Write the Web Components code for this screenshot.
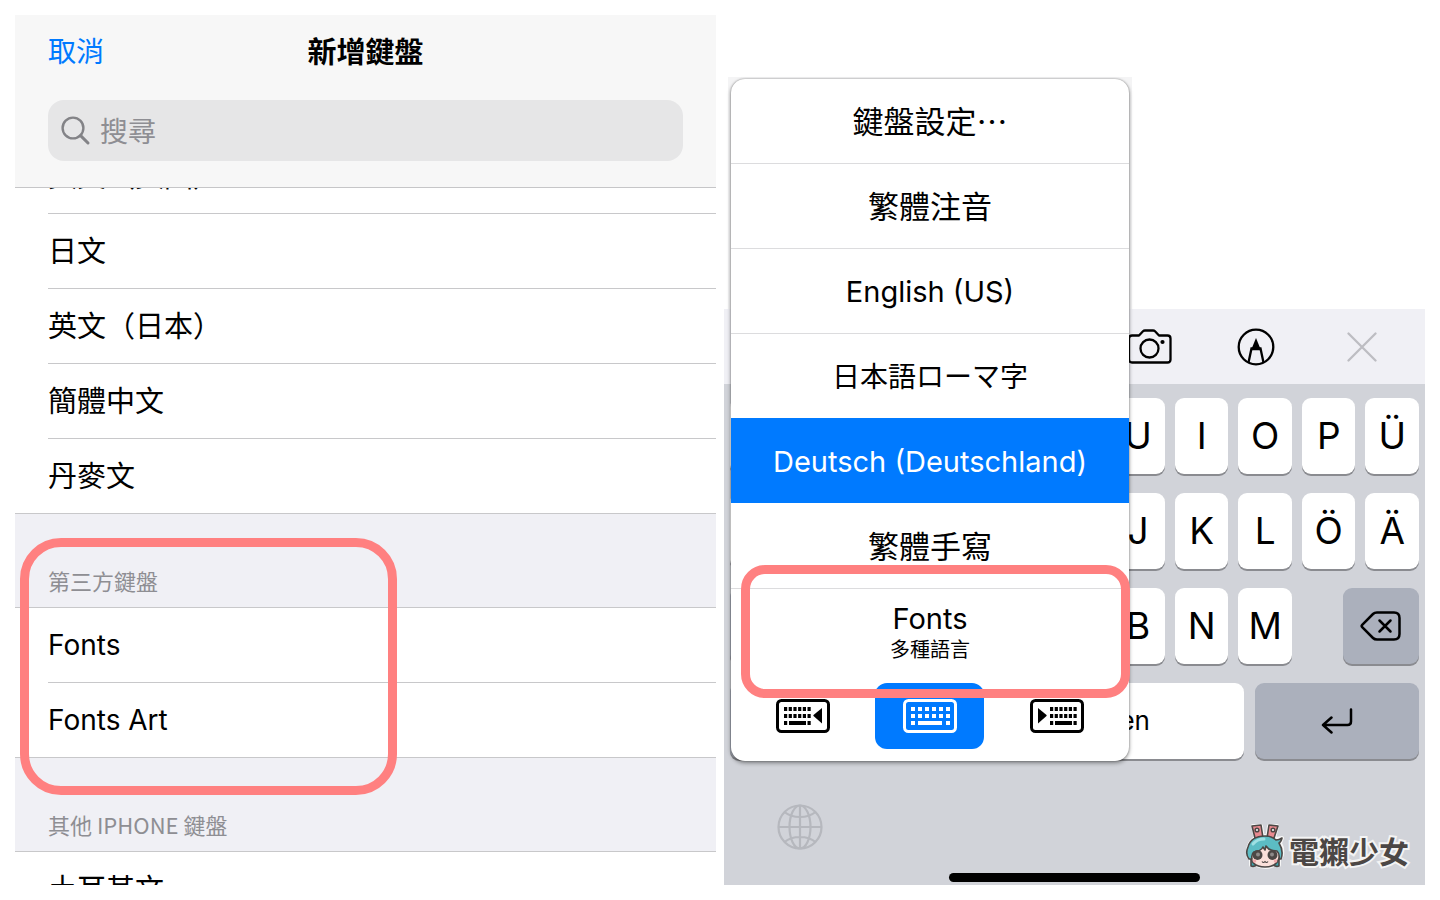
<!DOCTYPE html>
<html lang="zh-Hant">
<head>
<meta charset="utf-8">
<title>新增鍵盤</title>
<style>
  html, body { margin: 0; background: #fff; }
  body {
    --latin: Inter, "Noto Sans CJK TC", sans-serif;
    font-family: "Noto Sans CJK TC", Inter, sans-serif;
    color: #000;
  }
</style>
</head>
<body>
<page-split>
  <phone-settings slot="left">
    <settings-row>英文（英國）</settings-row>
    <settings-row>日文</settings-row>
    <settings-row>英文（日本）</settings-row>
    <settings-row>簡體中文</settings-row>
    <settings-row last>丹麥文</settings-row>
    <settings-group heading="第三方鍵盤" marked>
      <settings-row lang="en">Fonts</settings-row>
      <settings-row lang="en" last>Fonts Art</settings-row>
    </settings-group>
    <settings-group heading="其他 IPHONE 鍵盤">
      <settings-row>土耳其文</settings-row>
    </settings-group>
  </phone-settings>
  <phone-keyboard slot="right"></phone-keyboard>
  <keyboard-menu slot="menu">
    <menu-row>鍵盤設定⋯</menu-row>
    <menu-row>繁體注音</menu-row>
    <menu-row lang="en">English (US)</menu-row>
    <menu-row lang="ja">日本語ローマ字</menu-row>
    <menu-row lang="de" selected>Deutsch (Deutschland)</menu-row>
    <menu-row>繁體手寫</menu-row>
    <menu-row lang="en" last note="多種語言">Fonts</menu-row>
  </keyboard-menu>
</page-split>

<script>
const define = (name, render) => customElements.define(name, class extends HTMLElement {
  connectedCallback() {
    if (this.shadowRoot) return;
    const t = document.createElement('template');
    t.innerHTML = '<style>*{box-sizing:border-box}button{font:inherit;color:inherit;border:0;padding:0;margin:0;background:none}</style>' + render(this);
    this.attachShadow({ mode: 'open' }).append(t.content.cloneNode(true));
  }
});

define('page-split', () => `
  <style>
    :host { display: grid; grid-template-columns: 1fr 1fr; gap: 8px; padding: 15px; box-sizing: border-box; }
    .left { display: grid; min-width: 0; }
    .right { position: relative; display: flex; flex-direction: column; justify-content: flex-end; min-width: 0; }
  </style>
  <main class="left"><slot name="left"></slot></main>
  <aside class="right"><slot name="right"></slot><slot name="menu"></slot></aside>`);

define('phone-settings', () => `
  <style>
    :host { display: flex; flex-direction: column; height: 870px; overflow: hidden; background: #fff; }
    header { position: relative; z-index: 1; background: #f7f7f7; border-bottom: 1px solid #c6c6c8; padding: 15px 33px 26px; }
    .bar { display: grid; grid-template-columns: 1fr auto 1fr; align-items: center; height: 40px; }
    .cancel { justify-self: start; font-size: 28px; line-height: 40px; color: #007aff; }
    h1 { margin: 0; font-size: 29px; line-height: 40px; font-weight: 700; }
    .search { display: flex; align-items: center; gap: 9px; height: 61px; margin-top: 30px; padding: 0 13px; border-radius: 16px; background: #e6e6e7; }
    .search svg { flex: none; width: 30px; height: 30px; }
    input { flex: 1; min-width: 0; border: 0; padding: 0 0 2px; background: none; outline: 0; font: inherit; font-size: 28px; line-height: 40px; height: 42px; }
    input::placeholder { color: #8e8e93; opacity: 1; }
    .list { flex: 1; min-height: 0; overflow: hidden; }
    .scrolled { margin-top: -49px; }
  </style>
  <header>
    <div class="bar"><button class="cancel">取消</button><h1>新增鍵盤</h1></div>
    <label class="search">
      <svg viewBox="0 0 30 30" fill="none" stroke="#838387" stroke-width="2.4" stroke-linecap="round"><circle cx="12" cy="12" r="10.4"/><path d="M19.6 19.6 27 27" stroke-width="3"/></svg>
      <input type="search" aria-label="搜尋" placeholder="搜尋">
    </label>
  </header>
  <div class="list"><div class="scrolled"><slot></slot></div></div>`);

define('settings-row', () => `
  <style>
    :host { display: block; padding-left: 33px; background: #fff; }
    :host([last]) { padding-left: 0; }
    button { display: flex; align-items: center; width: 100%; height: 75px; padding-bottom: 4px; font-size: 29px; line-height: 40px; text-align: left; border-bottom: 1px solid #c8c8ca; }
    :host([lang=en]) button { font-family: var(--latin); font-size: 28px; padding-bottom: 0; }
    :host([last]) button { padding-left: 33px; }
  </style>
  <button><span><slot></slot></span></button>`);

define('settings-group', el => `
  <style>
    :host { display: block; position: relative; }
    h2 { margin: 0; height: 94px; padding: 0 33px 11px; display: flex; align-items: flex-end; background: #f0f0f5; border-bottom: 1px solid #c8c8ca; color: #8e8e93; font-size: 22px; line-height: 32px; font-weight: 400; }
    mark-frame { position: absolute; top: 24px; left: 5px; width: 377px; height: 257px; --radius: 41px; }
  </style>
  <h2>${el.getAttribute('heading')}</h2><slot></slot>
  ${el.hasAttribute('marked') ? '<mark-frame></mark-frame>' : ''}`);

define('mark-frame', () => `
  <style>:host { display: block; box-sizing: border-box; border: 9px solid #ff8080; border-radius: var(--radius); pointer-events: none; z-index: 2; }</style>`);

define('menu-row', el => `
  <style>
    :host { display: block; }
    button { display: flex; flex-direction: column; align-items: center; justify-content: center; width: 100%; height: 85px; padding-bottom: 2px; font-size: 31px; line-height: 40px; border-bottom: 1px solid #dcdcde; }
    :host([lang=en]) button, :host([lang=de]) button { font-family: var(--latin); font-size: 29px; padding: 2px 0 0; }
    :host([lang=ja]) button { font-family: "Noto Sans CJK JP", Inter, sans-serif; font-size: 28px; }
    :host([selected]) button { position: relative; background: #007aff padding-box; color: #fff; border-color: #fff; box-shadow: 0 -1px 0 #007aff; }
    :host([last]) button { border: 0; line-height: 34px; }
    small { font-size: 20px; line-height: 28px; }
  </style>
  <button><span><slot></slot></span>${el.hasAttribute('note') ? `<small>${el.getAttribute('note')}</small>` : ''}</button>`);

const dots = (x0, n, step) => [8, 15].map(y => Array.from({ length: n }, (_, i) =>
  `<rect x="${x0 + i * step}" y="${y}" width="${step > 5 ? 4 : 3.2}" height="4"/>`).join('')).join('');
const sideKeys = `${dots(8, 6, 4.7)}<rect x="8" y="22" width="3.2" height="4"/><rect x="13" y="22" width="17" height="4"/><rect x="31.5" y="22" width="3.2" height="4"/><path d="M46 9v15.500L37.500 17q-.4-.5 0-1z"/>`;
const frame = '<rect x="1.500" y="1.500" width="51" height="31" rx="4" fill="none" stroke="currentColor" stroke-width="3"/>';

define('keyboard-menu', () => `
  <style>
    :host { position: absolute; top: 62px; left: 4px; width: 404px; padding: 2px 3px 0; box-sizing: border-box; background: linear-gradient(#f4f4f5, #f4f4f5) top / 100% 232px no-repeat; }
    .card { position: relative; border-radius: 14px; background: #fff; box-shadow: 0 0 2px #0006, 0 2px 4px #0006; }
    .modes { display: grid; grid-template-columns: repeat(3, 1fr); justify-items: center; padding: 9px 8px 12px; }
    .modes button { display: grid; place-items: center; width: 109px; height: 66px; border-radius: 12px; }
    .modes .on { background: #007aff; color: #fff; }
    svg { width: 54px; height: 34px; fill: currentColor; }
    mark-frame { position: absolute; top: 486px; left: 10px; width: 389px; height: 133px; --radius: 24px; }
  </style>
  <div class="card">
    <slot></slot>
    <div class="modes">
      <button aria-label="靠左"><svg viewBox="0 0 54 34">${frame}${sideKeys}</svg></button>
      <button class="on" aria-label="置中"><svg viewBox="0 0 54 34">${frame}${dots(8, 6, 7)}<rect x="8" y="22" width="4" height="4"/><rect x="15" y="22" width="24" height="4"/><rect x="43" y="22" width="4" height="4"/></svg></button>
      <button aria-label="靠右"><svg viewBox="0 0 54 34">${frame}<path d="M8 9v15.500L16.500 17q.4-.5 0-1z"/><g transform="translate(12)">${sideKeys.replace(/<path.*$/, '')}</g></svg></button>
    </div>
    <mark-frame></mark-frame>
  </div>`);

define('key-cap', () => `
  <style>
    :host { display: block; flex: 1 1 0; min-width: 0; }
    button { display: flex; align-items: center; justify-content: center; width: 100%; height: 76px; border-radius: 9px; background: #fff; box-shadow: 0 2px 0 #8a8b90; font-family: var(--latin); font-size: 37px; line-height: 44px; }
    :host([dark]) button { background: #abb0bc; }
    :host([word]) button { font-size: 26px; }
  </style>
  <button><slot></slot></button>`);

const keys = (blank, letters) => '<key-cap></key-cap>'.repeat(blank) + [...letters].map(c => `<key-cap>${c}</key-cap>`).join('');

define('phone-keyboard', () => `
  <style>
    :host { display: block; background: #d1d3d9; }
    svg { display: block; }
    .tools { display: flex; justify-content: flex-end; height: 75px; padding-right: 10px; background: #f0f0f5; }
    .tools button { display: grid; place-items: center; width: 106px; }
    .keys { display: grid; gap: 19px; padding: 14px 6px 0; }
    .row { display: flex; gap: 10px; }
    .third { display: grid; grid-template-columns: 76px 1fr 76px; gap: 51px; }
    .fourth { display: grid; grid-template-columns: 164px 1fr 164px; gap: 11px; }
    .foot { display: flex; justify-content: space-between; align-items: flex-end; height: 114px; padding: 0 16px 3px 53px; }
    .foot button { padding-bottom: 20px; }
    .bottom { padding-bottom: 3px; }
    .home { width: 251px; height: 9px; margin: 0 auto; border-radius: 5px; background: #000; }
  </style>
  <div class="tools">
    <button aria-label="相機"><svg width="44" height="36" viewBox="0 0 44 36" fill="none" stroke="#000" stroke-width="2.300" stroke-linejoin="round"><path d="M4 6.500h7l4-4.200q.8-.8 2-.8h8q1.200 0 2 .8l4 4.200h8.500q3 0 3 3v21q0 3-3 3H4q-3 0-3-3v-21q0-3 3-3z"/><circle cx="21.500" cy="19.500" r="9"/><circle cx="34.500" cy="13" r="2.100" fill="#000" stroke="none"/></svg></button>
    <button aria-label="標示"><svg width="38" height="38" viewBox="0 0 38 38" fill="none" stroke="#000" stroke-width="2.300"><circle cx="19" cy="19" r="17.300"/><path d="M11.500 34.500 14.500 20.500h9l3 14"/><path d="M19 10 24 22.300H14z" fill="#000" stroke="none"/></svg></button>
    <button aria-label="關閉"><svg width="30" height="30" viewBox="0 0 30 30" fill="none" stroke="#bdbdc2" stroke-width="2.300" stroke-linecap="round"><path d="M1.500 1.500l27 27M28.500 1.500l-27 27"/></svg></button>
  </div>
  <div class="keys">
    <div class="row">${keys(6, 'UIOPÜ')}</div>
    <div class="row">${keys(6, 'JKLÖÄ')}</div>
    <div class="third"><key-cap dark></key-cap><div class="row">${keys(4, 'BNM')}</div>
      <key-cap dark aria-label="刪除"><svg width="42" height="30" viewBox="0 0 42 30" fill="none" stroke="#000" stroke-width="2.500" stroke-linejoin="round" stroke-linecap="round"><path d="M17 1.500h17q5.500 0 5.500 5.500v16q0 5.500-5.500 5.500H17q-2.500 0-4-1.500L2.200 16.200q-1.200-1.200 0-2.400L13 3q1.500-1.500 4-1.500"/><path d="M19.500 9.500l11 11M30.500 9.500l-11 11"/></svg></key-cap></div>
    <div class="fourth"><key-cap dark></key-cap><key-cap word>Leerzeichen</key-cap>
      <key-cap dark aria-label="換行"><svg width="32" height="26" viewBox="0 0 32 26" fill="none" stroke="#000" stroke-width="2.500" stroke-linejoin="round" stroke-linecap="round"><path d="M30 1.500v12q0 3.500-3.500 3.500H2M10.500 9.500 2 17l8.500 7.500"/></svg></key-cap></div>
  </div>
  <div class="foot">
    <button aria-label="切換鍵盤"><svg width="46" height="46" viewBox="0 0 46 46" fill="none" stroke="#b6b8be" stroke-width="2.200"><circle cx="23" cy="23" r="21.500"/><ellipse cx="23" cy="23" rx="10.500" ry="21.500"/><path d="M23 1.500v43M1.500 23h43M7.500 8q6 5 15.500 5t15.500-5M7.500 38q6-5 15.500-5t15.500 5"/></svg></button>
    <brand-mark></brand-mark>
  </div>
  <div class="bottom"><div class="home"></div></div>`);

define('brand-mark', () => `
  <style>
    :host { display: flex; align-items: flex-end; gap: 4px; }
    svg { width: 40px; height: 48px; }
    span { font-size: 30px; line-height: 40px; font-weight: 700; color: #4c4745; -webkit-text-stroke: 4px #f4f4f4; paint-order: stroke fill; }
  </style>
  <svg viewBox="0 0 40 48" stroke-linejoin="round">
    <g stroke="#f6f6f6" stroke-width="4" fill="#f6f6f6"><path d="M8 4h8l2 12h-7zM24 4h8l-3 12h-7z"/><path d="M3 32Q2 15 20 14q8 0 12 3l5-1-2 5q3 5 2 12l-3 4v6h-5q-8 4-18 0H6v-6l-3-3z"/></g>
    <g stroke="#4c4745" stroke-width="1.600"><path d="M7 4l9-1 2 13h-8zM24 3l9 1-4 12h-7z" fill="#ea8a90"/><circle cx="12" cy="8" r="1.800" fill="#fff"/><circle cx="28" cy="8" r="1.800" fill="#fff"/>
    <path d="M6 36v8q3 1 6-1zM34 36v8q-3 1-6-1z" fill="#3aa5ae"/>
    <path d="M5 30q0 15 15 15t15-15l-4-12H9z" fill="#fbe0da"/>
    <path d="M4 37Q0 32 3 25 6 14 20 14q7 0 11 4 3 0 6-2-1 4-3 5 5 8 2 16h-2q1-5-2-8-8 0-11-5l-1 4-2-3q-2 4-9 5-3 2-2 7z" fill="#5cbcc4"/></g>
    <path d="M8 22q4-5 11-5" fill="none" stroke="#9fe0e3" stroke-width="3" stroke-linecap="round"/>
    <circle cx="12.500" cy="33" r="5" fill="#4c4745"/><circle cx="27.500" cy="33" r="5" fill="#4c4745"/><circle cx="13" cy="32.500" r="2" fill="#8d8a89"/><circle cx="27" cy="32.500" r="2" fill="#8d8a89"/>
    <circle cx="9.500" cy="39" r="1.800" fill="#f3a9ab"/><circle cx="30.500" cy="39" r="1.800" fill="#f3a9ab"/>
    <path d="M17 39.500q1.500 2 3 0 1.500 2 3 0" fill="none" stroke="#4c4745" stroke-width="1.200"/>
  </svg><span>電獺少女</span>`);
</script>
</body>
</html>
